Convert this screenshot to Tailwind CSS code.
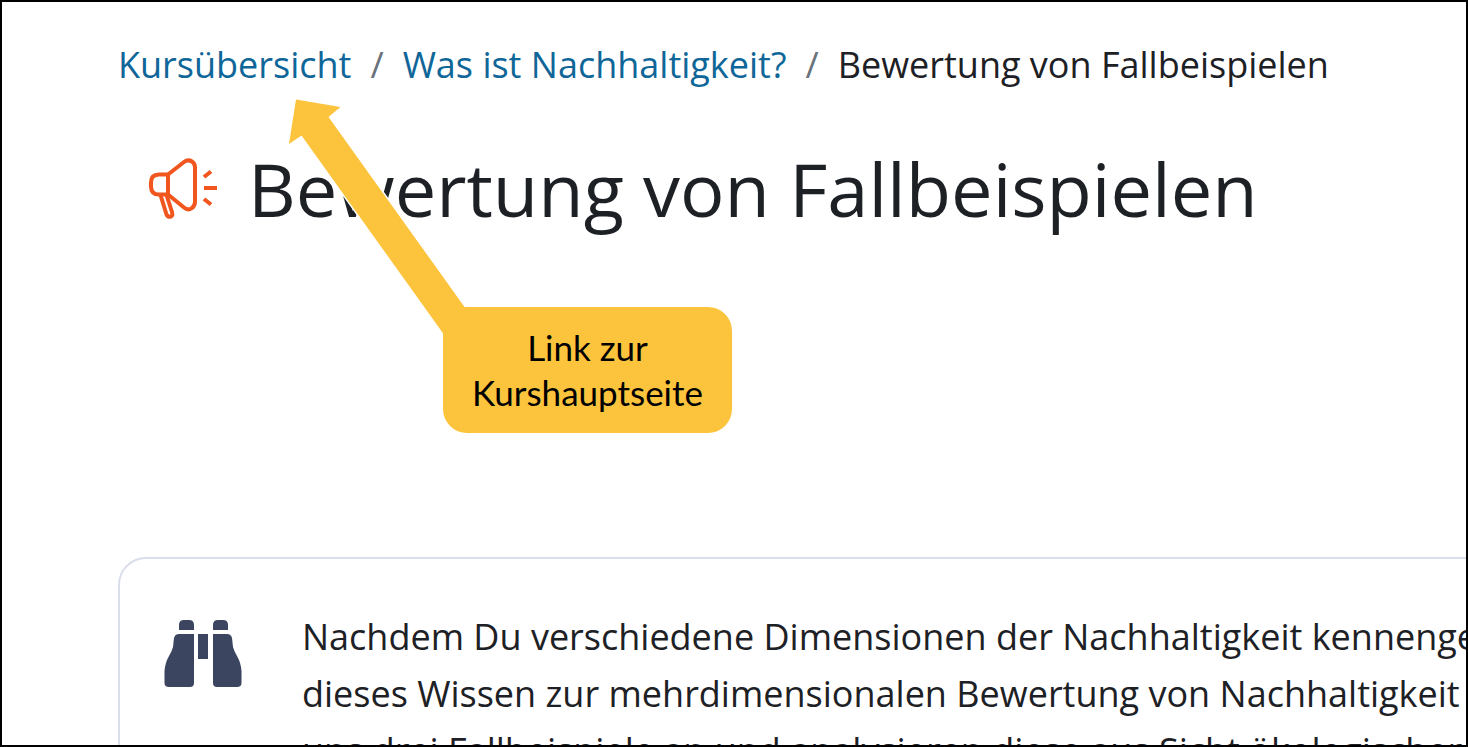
<!DOCTYPE html>
<html lang="de">
<head>
    <meta charset="UTF-8">
    <meta name="viewport" content="width=device-width, initial-scale=1.0">
    <title>Bewertung von Fallbeispielen</title>
    <script src="https://cdn.jsdelivr.net/npm/@tailwindcss/browser@4"></script>
</head>
<body class="bg-white text-[#1d2125] font-['Open_Sans','Noto_Sans',sans-serif]">
    <div class="relative h-screen overflow-hidden border-2 border-black pl-[116px]">
        <!-- Breadcrumb -->
        <nav aria-label="Breadcrumb" class="pt-[37px]">
            <ol class="flex gap-[19px] whitespace-nowrap text-[36px] leading-[52px]">
                <li><a href="#" class="text-[#0f6698]">Kursübersicht</a></li>
                <li class="text-[#6a737b]" aria-hidden="true">/</li>
                <li><a href="#" class="text-[#0f6698]">Was ist Nachhaltigkeit?</a></li>
                <li class="text-[#6a737b]" aria-hidden="true">/</li>
                <li aria-current="page">Bewertung von Fallbeispielen</li>
            </ol>
        </nav>

        <!-- Page title -->
        <header class="mt-[54px] flex items-center gap-7 pl-7">
            <svg class="h-[70px] w-[74px] shrink-0" viewBox="146 154 74 70" fill="none" stroke="#f0561d" stroke-width="4" stroke-linejoin="round" aria-hidden="true">
                <path d="M168 174.500H159Q151 174.500 151 182.500V186.500Q151 194.500 159 194.500H168Z"/>
                <path d="M168 174.500L184 162Q188 159 192 161.500Q195 163.500 195 167.500V201.500Q195 206 192 208Q188 211 184 207.500L168 194.500"/>
                <path d="M160.500 195L166.500 214.500Q168 217.500 171 216.500Q173 215.500 172 212L166.500 195"/>
                <path d="M204 177L211 171.500M204 188H217M204 199L211 204.500"/>
            </svg>
            <h1 class="whitespace-nowrap text-[74px] leading-[88px]">Bewertung von Fallbeispielen</h1>
        </header>

        <!-- Content card, runs past the right edge -->
        <section class="mt-[324px] -mr-10 flex gap-[60px] rounded-[28px] border-2 border-[#dadeea] pt-[49px] pl-11">
            <svg class="mt-3 h-[68px] w-[78px] shrink-0" viewBox="164 620 78 68" fill="#3c4560" aria-hidden="true">
                <path d="M179 630V625Q179 620 184 620H189Q194 620 194 625V630Z"/>
                <path d="M213 630V625Q213 620 218 620H223Q228 620 228 625V630Z"/>
                <path d="M179 634H194V683Q194 687 190 687H169Q164.500 687 164.500 683V671Q165 663 169 656Q172 651 173 647L174 638Q175 634 179 634Z"/>
                <path d="M227 634H213V683Q213 687 217 687H237Q241.500 687 241.500 683V671Q241 663 237 656Q234 651 233 647L232 638Q231 634 227 634Z"/>
                <path d="M198 634H208V659H198Z"/>
            </svg>
            <p class="whitespace-nowrap text-[36px] leading-[57px]">
                Nachdem Du verschiedene Dimensionen der Nachhaltigkeit kennengelernt hast,<br>
                dieses Wissen zur mehrdimensionalen Bewertung von Nachhaltigkeit<br>
                uns drei Fallbeispiele an und analysieren diese aus Sicht ökologischer
            </p>
        </section>

        <!-- Callout with arrow -->
        <svg class="absolute top-[88px] left-[277px] h-[260px] w-[210px]" viewBox="279 90 210 260" aria-hidden="true">
            <path d="M296 99.500L340.500 107L328.500 117L476 323L455 350L301.500 135.500L289 144Z" fill="#fcc43d" stroke="#fff" stroke-width="3" paint-order="stroke"/>
        </svg>
        <div class="absolute top-[305px] left-[441px] flex h-[126px] w-[289px] items-center justify-center rounded-3xl rounded-tl-none bg-[#fcc43d] text-center font-['Lato',sans-serif] text-[35px] leading-[45px] text-black">
            Link zur<br>Kurshauptseite
        </div>
    </div>
</body>
</html>
